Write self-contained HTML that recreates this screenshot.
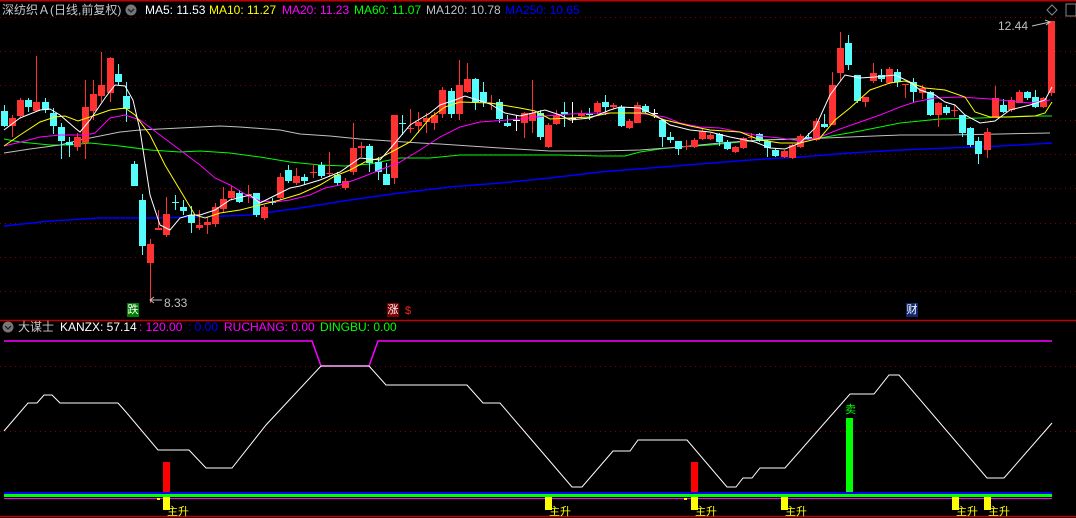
<!DOCTYPE html>
<html><head><meta charset="utf-8">
<style>
html,body{margin:0;padding:0;background:#000;}
body{width:1076px;height:518px;overflow:hidden;position:relative;font-family:"Liberation Sans","Noto Sans CJK SC",sans-serif;}
svg{position:absolute;left:0;top:0;}
.t{position:absolute;font-size:12px;white-space:nowrap;line-height:14px;}
</style></head><body>
<svg id="s" width="1076" height="518" xmlns="http://www.w3.org/2000/svg"></svg>
<div class="t" style="left:2px;top:3px;color:#c8c8c8">深纺织Ａ(日线,前复权)</div>
<div class="t" style="left:145px;top:3px;color:#fff">MA5: 11.53</div>
<div class="t" style="left:209px;top:3px;color:#ffff00">MA10: 11.27</div>
<div class="t" style="left:282px;top:3px;color:#ff00ff">MA20: 11.23</div>
<div class="t" style="left:354px;top:3px;color:#00ff00">MA60: 11.07</div>
<div class="t" style="left:426px;top:3px;color:#c0c0c0">MA120: 10.78</div>
<div class="t" style="left:505px;top:3px;color:#0000ff">MA250: 10.65</div>
<div class="t" style="left:18px;top:320px;color:#c8c8c8">大谋士</div>
<div class="t" style="left:60px;top:320px;color:#fff">KANZX: 57.14</div>
<div class="t" style="left:139px;top:320px;color:#ff00ff">: 120.00</div>
<div class="t" style="left:188px;top:320px;color:#0000ff">: 0.00</div>
<div class="t" style="left:224px;top:320px;color:#ff00ff">RUCHANG: 0.00</div>
<div class="t" style="left:320px;top:320px;color:#00ff00">DINGBU: 0.00</div>
<div class="t" style="left:998px;top:19px;color:#c0c0c0">12.44</div>
<div class="t" style="left:164px;top:296px;color:#c0c0c0">8.33</div>
<div class="t" style="left:127px;top:303px;width:12px;height:14px;background:#008000;color:#fff;font-size:11px;text-align:center">跌</div>
<div class="t" style="left:387px;top:303px;width:12px;height:14px;background:#800000;color:#fff;font-size:11px;text-align:center">涨</div>
<div class="t" style="left:405px;top:304px;color:#ff2020;font-size:11px">$</div>
<div class="t" style="left:906px;top:303px;width:12px;height:14px;background:#102870;color:#fff;font-size:11px;text-align:center">财</div>
<div class="t" style="left:845px;top:403px;color:#00ff00;font-size:11px">卖</div>
<script>
var s=document.getElementById('s'),h='';
function L(x1,y1,x2,y2,c,w,d){h+='<line x1="'+x1+'" y1="'+y1+'" x2="'+x2+'" y2="'+y2+'" stroke="'+c+'" stroke-width="'+(w||1)+'"'+(d?' stroke-dasharray="'+d+'"':'')+'/>';}
function R(x,y,w,hh,c){h+='<rect x="'+x+'" y="'+y+'" width="'+w+'" height="'+hh+'" fill="'+c+'"/>';}
function P(p,c,w){h+='<polyline fill="none" stroke="'+c+'" stroke-width="'+(w||1)+'" points="'+p+'"/>';}
L(0,0.5,1076,0.5,'#c00000',2);
[17,51,85,120,154,188,223,257,291].forEach(function(y){L(0,y+.5,1076,y+.5,'#800000',1,'1,4');});
[366,431].forEach(function(y){L(0,y+.5,1076,y+.5,'#800000',1,'1,4');});
L(0,320.5,1076,320.5,'#c00000',1.5);
L(0,516.5,1076,516.5,'#c00000',1.5);
// MAs
P('4,139 20,142 50,145 70,145 90,143 120,146 150,150 180,152 200,151 230,153 260,157 290,162 320,165 345,166 370,164 400,158 430,158 460,155 490,155 520,155 560,155 600,156 625,156 640,152 660,149 680,147 710,145 730,143 760,140 790,139 820,138 860,131 900,123 940,119 980,118 1030,116 1052,116','#00ff00');
P('4,153 30,149 60,145 80,140 100,136 120,132 140,130 180,128 220,126 240,127 280,130 300,134 330,136 360,139 390,141 420,143 440,144 500,148 550,151 600,151 640,150 680,147 720,143 760,140 800,139 850,137 900,135 950,135 1000,134 1050,133','#c0c0c0');
P('4,226 50,221 100,218 150,218 200,217 250,215 300,208 350,200 400,193 450,187 500,183 550,178 600,172 650,168 700,164 750,160 800,157 850,153 900,150 950,148 1000,146 1052,143','#0000ff',1.5);
var cd=[[0,'c',111,126,105,127],[1,'r',118,126,115,137],[2,'r',100,116,98,117],[3,'c',100,107,98,112],[4,'r',102,111,56,112],[5,'c',102,110,98,113],[6,'c',113,126,108,134],[7,'c',127,141,123,159],[8,'c',142,145,137,157],[9,'r',137,147,133,151],[10,'r',107,143,80,159],[11,'r',94,111,80,120],[12,'r',85,96,52,102],[13,'r',58,93,57,102],[14,'c',74,82,64,85],[15,'c',96,109,82,122],[16,'c',164,186,161,186],[17,'c',200,246,194,255],[18,'r',244,263,239,303],[19,'r',228,230,210,230],[20,'r',214,235,197,237],[21,'c',202,203,195,210],[22,'c',207,211,200,215],[23,'c',215,223,206,233],[24,'r',225,228,210,230],[25,'r',222,225,217,234],[26,'r',207,224,203,227],[27,'r',199,209,187,212],[28,'r',191,198,186,200],[29,'c',193,202,190,203],[30,'r',194,195,185,203],[31,'c',193,215,193,217],[32,'r',207,218,205,220],[33,'c',202,203,198,205],[34,'r',177,198,173,200],[35,'c',170,181,165,183],[36,'r',176,183,168,185],[37,'c',177,181,174,185],[38,'r',172,173,164,178],[39,'c',165,176,162,178],[40,'r',173,174,152,177],[41,'c',175,183,172,185],[42,'r',181,188,178,190],[43,'r',148,172,123,175],[44,'r',146,148,142,157],[45,'c',146,163,144,172],[46,'c',162,172,157,180],[47,'c',174,185,163,185],[48,'r',115,178,115,184],[49,'c',123,124,115,135],[50,'r',128,129,109,133],[51,'r',122,126,112,133],[52,'r',118,122,113,133],[53,'r',115,123,112,130],[54,'r',90,114,87,118],[55,'c',91,114,88,118],[56,'r',85,114,60,120],[57,'r',79,92,63,93],[58,'c',79,102,78,110],[59,'c',92,102,82,107],[60,'r',103,104,95,110],[61,'c',102,119,99,123],[62,'c',123,126,115,127],[63,'w',120,121,115,131],[64,'r',113,123,112,138],[65,'r',113,121,80,133],[66,'c',113,137,110,140],[67,'r',125,147,123,148],[68,'r',115,124,110,125],[69,'c',112,114,102,127],[70,'w',118,119,102,123],[71,'r',113,116,110,118],[72,'c',114,115,108,120],[73,'r',103,112,101,114],[74,'c',102,107,95,115],[75,'r',105,107,103,109],[76,'c',107,126,105,127],[77,'r',121,128,119,129],[78,'r',105,123,102,123],[79,'c',106,112,104,114],[80,'w',113,114,109,118],[81,'c',120,137,120,147],[82,'c',137,140,132,143],[83,'c',141,149,141,155],[84,'r',146,147,140,150],[85,'r',140,147,138,148],[86,'r',131,139,129,140],[87,'r',135,139,133,140],[88,'c',134,142,133,146],[89,'c',142,149,140,150],[90,'r',147,152,146,153],[91,'r',138,148,137,149],[92,'r',137,138,133,140],[93,'c',134,141,133,142],[94,'c',141,148,140,157],[95,'c',150,156,148,157],[96,'r',151,157,150,158],[97,'r',145,158,144,159],[98,'r',136,147,134,148],[99,'c',137,139,133,140],[100,'r',121,140,118,141],[101,'c',124,127,114,128],[102,'r',85,125,72,125],[103,'r',48,73,32,81],[104,'c',43,65,35,70],[105,'c',75,101,75,103],[106,'r',97,102,97,107],[107,'r',73,81,63,83],[108,'c',75,79,69,82],[109,'r',69,83,67,84],[110,'c',72,82,69,87],[111,'r',84,85,84,98],[112,'c',82,92,78,102],[113,'r',88,93,85,99],[114,'c',92,115,91,116],[115,'r',103,115,102,127],[116,'c',107,113,105,115],[117,'r',110,111,105,117],[118,'c',115,133,115,137],[119,'c',128,145,127,147],[120,'c',141,154,137,164],[121,'r',132,150,128,158],[122,'r',98,118,86,118],[123,'c',105,112,99,113],[124,'r',100,110,97,112],[125,'r',92,103,90,103],[126,'c',92,98,91,100],[127,'c',97,107,90,108],[128,'r',98,107,97,108],[129,'r',21,93,21,96]];
var col={r:'#ff3232',c:'#54fcfc',w:'#ffffff'};
cd.forEach(function(a){var x=Math.round(4+8.12*a[0]);var c=col[a[1]];L(x+.5,a[4],x+.5,a[5],c);var hh=a[3]-a[2];if(hh<2){R(x-3,a[2],7,1,c);}else R(x-3,a[2],7,hh,c);});
P('4,146 25,141 40,137 60,135 85,135 95,133 110,118 125,115 140,120 160,135 180,150 200,165 215,178 230,185 250,197 260,201 275,202 290,200 310,195 325,188 340,185 360,178 380,170 400,162 420,150 440,137 460,127 480,122 520,119 545,116 570,114 600,113 630,113 645,114 665,117 680,123 700,127 720,128 740,132 760,136 780,138 800,141 820,137 840,129 860,122 880,115 900,107 915,102 935,98 960,97 990,99 1010,101 1030,103 1050,100','#ff00ff');
P('4,146 20,135 40,122 55,117 65,116 78,121 90,117 110,110 125,108 135,115 150,135 165,165 180,190 195,215 205,218 220,213 240,210 260,205 280,200 300,194 320,185 335,176 350,170 365,162 380,158 395,150 410,142 430,118 445,107 460,102 490,103 520,108 535,111 550,119 570,118 590,117 610,113 630,113 645,113 665,120 690,126 710,130 740,132 760,140 780,143 800,143 820,138 835,120 850,108 870,90 890,83 905,81 925,88 945,90 965,97 975,112 990,117 1010,117 1035,116 1045,113 1052,102','#ffff00');
P('4,130 20,118 40,110 50,109 60,115 75,128 80,132 90,120 105,98 115,85 125,86 133,100 140,130 150,195 160,225 170,230 180,218 190,215 200,215 215,210 230,200 250,195 260,203 270,198 290,188 300,186 320,180 340,172 360,158 380,160 395,143 410,125 430,113 440,105 455,100 465,96 490,104 505,113 520,116 545,110 560,115 570,120 590,118 610,110 620,107 640,108 655,115 670,125 690,130 710,132 730,137 755,142 770,148 785,149 800,143 815,128 830,95 845,75 860,78 875,77 895,75 910,82 920,90 935,95 945,102 955,105 965,115 980,123 995,121 1010,110 1030,105 1045,100 1052,87','#ffffff');
// annotations
L(150,300,162,300,'#c0c0c0');P('154,297 150,300 154,303','#c0c0c0');
L(1032,26,1050,22,'#c0c0c0');P('1045,20 1050,22 1046,25','#c0c0c0');
h+='<path d="M1052,5 L1057,10 L1052,15 L1047,10 Z" fill="none" stroke="#888"/>';
h+='<rect x="1066" y="4" width="10" height="12" fill="none" stroke="#888"/>';
h+='<circle cx="131" cy="10" r="5.5" fill="#777"/><path d="M128,9 L131,12 L134,9" stroke="#222" fill="none" stroke-width="1.3"/>';
h+='<circle cx="8" cy="327" r="5.5" fill="#777"/><path d="M5,326 L8,329 L11,326" stroke="#222" fill="none" stroke-width="1.3"/>';
// lower panel
P('4,341 312,341 321,366 369,366 378,341 1052,341','#ff00ff',1.5);
P('4,431 28,403 37,403 44,395 52,395 60,403 118,403 126,412 158,450 189,450 206,468 232,468 266,425 321,366 369,366 386,385 467,385 483,403 500,403 530,438 572,487 582,487 613,451 630,451 638,440 687,440 727,487 736,487 743,478 752,478 760,468 785,468 850,394 874,394 889,375 899,375 987,478 1004,478 1052,423','#ffffff');
R(163,462,7,33,'#ff0000');R(691,462,7,33,'#ff0000');R(846,418,7,77,'#00ff00');
L(4,498.5,1052,498.5,'#ff00ff');
R(4,492,1048,2,'#0000ff');R(4,494,1048,3,'#00ff00');
[163,545,691,781,952,984].forEach(function(x){R(x,497,7,13,'#ffff00');h+='<text x="'+(x+4)+'" y="515" fill="#ffff00" font-size="11" font-family="Noto Sans CJK SC,sans-serif">主升</text>';});
R(157,498,3,2,'#ffff00');R(684,498,3,2,'#ffff00');
s.innerHTML=h;
</script>
</body></html>
